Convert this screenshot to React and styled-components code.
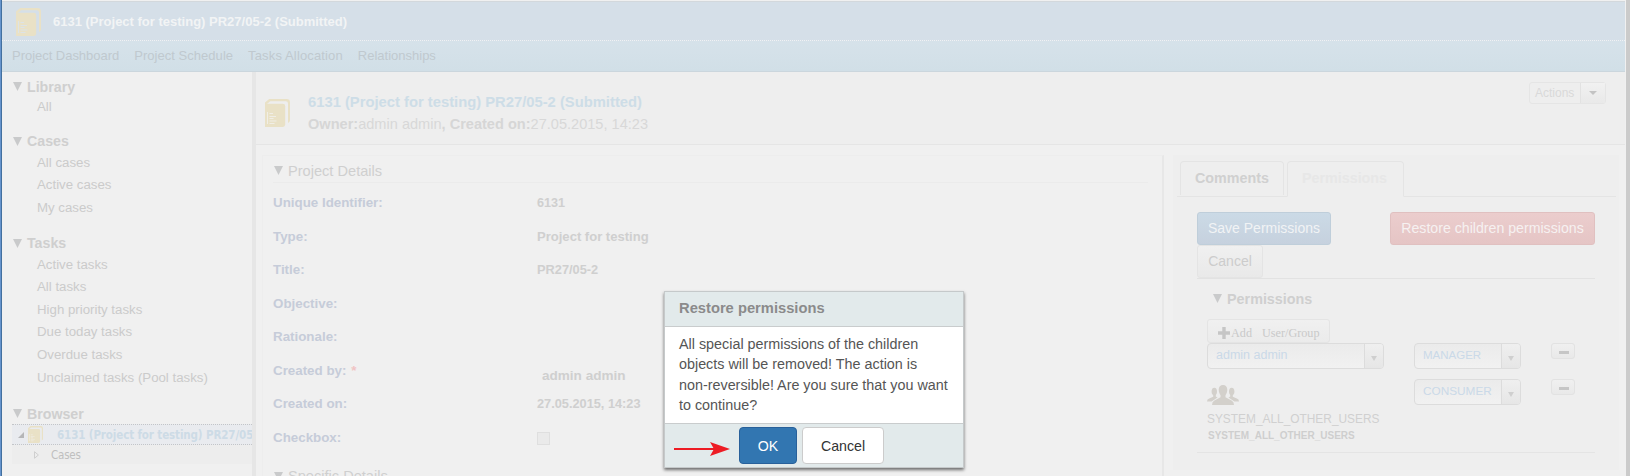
import React from "react";
import styled, { createGlobalStyle } from "styled-components";

const Global = createGlobalStyle`
  * { box-sizing: border-box; }
  html, body { margin: 0; padding: 0; overflow: hidden; }
  body { background: #f0f0f0; font-family: "Liberation Sans", Arial, sans-serif; color: #cdcdcd; }
`;

const Window = styled.div`
  position: relative;
  width: 1630px;
  height: 476px;
  overflow: hidden;
  display: flex;
  flex-direction: column;
  background: #f0f0f0;
  border-left: 1px solid #6694cd;
  border-right: 4px solid #cbcbcb;
  white-space: nowrap;
  &::before {
    content: "";
    position: absolute;
    left: 0;
    top: 0;
    bottom: 0;
    width: 1px;
    background: #43709f;
  }
`;

const TopBar = styled.header`
  height: 41px;
  margin: 0 1px;
  border-top: 1px solid #f0f0f0;
  border-bottom: 1px dotted #f0f2f4;
  background: #d5dfe8;
  box-shadow: inset 0 1px #d3d8dc;
  display: flex;
  align-items: center;
  padding: 2px 0 0 14px;
  gap: 12px;
`;

const BarTitle = styled.h1`
  margin: 0;
  font-size: 13px;
  line-height: 20px;
  color: #f2f4f5;
`;

const Nav = styled.nav`
  height: 31px;
  flex: none;
  margin: 0 1px;
  display: flex;
  align-items: center;
  gap: 15px;
  padding: 0 0 1px 10px;
  font-size: 13px;
  color: #c0c9cf;
  background: linear-gradient(#d6e2ea, #d1dfe7);
  border-bottom: 1px solid #cbd6dd;
`;

const NavItem = styled.span`
  letter-spacing: ${(p) => p.$track || 0}px;
`;

const Body = styled.div`
  flex: 1;
  min-height: 0;
  display: flex;
  margin-right: 1px;
`;

const Sidebar = styled.aside`
  width: 251px;
  flex: none;
  overflow: hidden;
  padding: 4px 0 0 11px;
`;

const Section = styled.section`
  margin-bottom: ${(p) => p.$gap}px;
`;

const Heading = styled.h2`
  margin: 0;
  height: ${(p) => p.$h || 21}px;
  display: flex;
  align-items: center;
  gap: 5px;
  padding-left: 1px;
  font-size: ${(p) => p.$size || 14.2}px;
  font-weight: ${(p) => (p.$light ? 400 : 700)};
  color: #cfcfcf;
`;

const PermissionHeading = styled(Heading)`
  padding-left: 6px;
  font-size: 14.35px;
`;

const Glyph = styled.svg`
  display: block;
  flex: none;
`;

const Item = styled.div`
  height: ${(p) => p.$h || 22.6}px;
  line-height: ${(p) => p.$h || 22.6}px;
  padding-left: 25px;
  font-size: 13.25px;
  color: #cbcbcb;
`;

const TreeNode = styled.div`
  height: 21px;
  display: flex;
  align-items: center;
  padding-left: 6px;
  background: #e9ebef;
  border-top: 1px dotted #c3c5c8;
  border-bottom: 1px dotted #c3c5c8;
  font: bold 11.5px "DejaVu Sans Condensed", "DejaVu Sans", sans-serif;
  letter-spacing: -0.12px;
  color: #cddbe6;
`;

const TreeIcon = styled.span`
  padding-left: 4px;
`;

const TreeLabel = styled.span`
  padding-left: 14px;
`;

const TreeLeaf = styled.div`
  height: 19px;
  display: flex;
  align-items: center;
  gap: 12px;
  padding-left: 22px;
  background: #ededed;
  font: 11.5px "DejaVu Sans Condensed", "DejaVu Sans", sans-serif;
  letter-spacing: -0.2px;
  color: #bfbfbf;
`;

const Splitter = styled.div`
  width: 4px;
  flex: none;
  background: #e6e6e6;
`;

const Main = styled.main`
  flex: 1;
  min-width: 0;
  display: flex;
  flex-direction: column;
`;

const ObjectHeader = styled.div`
  height: 73px;
  flex: none;
  display: flex;
  align-items: flex-start;
  padding: 0 19px 0 9px;
  background: #eeeeee;
  border-bottom: 1px solid #e5e5e5;
`;

const HeaderIcon = styled.div`
  padding-top: 27px;
  width: 43px;
`;

const HeaderText = styled.div`
  flex: 1;
  padding-top: 19px;
`;

const ObjectTitle = styled.div`
  font-size: 14.78px;
  line-height: 22px;
  font-weight: bold;
  color: #cddde7;
`;

const Meta = styled.div`
  font-size: 14.57px;
  line-height: 22px;
  color: #d8d8d8;
  b { color: #d6d6d6; }
`;

const ActionGroup = styled.div`
  display: flex;
  width: 77px;
  height: 22px;
  margin-top: 10px;
  border: 1px solid #e5e5e5;
  border-radius: 3px;
  font-size: 12px;
  color: #d9d9d9;
`;

const ActionLabel = styled.span`
  width: 50px;
  padding-left: 5px;
  line-height: 20px;
`;

const ActionCaret = styled.span`
  flex: 1;
  border-left: 1px solid #e2e2e2;
  background: linear-gradient(#f1f1f1, #e9e9e9);
  display: flex;
  align-items: center;
  justify-content: center;
  padding-bottom: 1px;
`;

const Columns = styled.div`
  display: flex;
  flex: 1;
  min-height: 0;
  padding: 10px 6px 0 6px;
  gap: 9px;
  align-items: flex-start;
`;

const Details = styled.section`
  width: 902px;
  height: 340px;
  flex: none;
  padding: 4px 14px 0 10px;
  background: #f0f0f0;
  border: 1px solid #ededed;
  border-right: 2px solid #e7e7e7;
`;

const Fields = styled.div`
  border-top: 1px solid #ebebeb;
  margin-top: 1px;
  padding-top: 3px;
`;

const Field = styled.div`
  height: 33.5px;
  display: grid;
  grid-template-columns: 264px 1fr;
  align-items: center;
  font-size: 13px;
  font-weight: bold;
`;

const Label = styled.span`
  font-size: 13.35px;
  color: #c6ccd9;
  em { color: #f0c4c4; font-style: normal; margin-left: 1px; }
`;

const Value = styled.span`
  color: #cfcfcf;
  font-size: ${(p) => (p.$inset ? 13.55 : p.$size || 13.05)}px;
  padding: ${(p) => (p.$inset ? "10px 0 0 5px" : 0)};
`;

const Check = styled.span`
  display: block;
  width: 13px;
  height: 13px;
  margin-top: 2px;
  background: #eaeaea;
  border: 1px solid #dfdfdf;
`;

const Side = styled.section`
  width: 446px;
  height: 315px;
  flex: none;
  padding: 6px 3px 0 4px;
  background: #eeeeee;
`;

const Tabs = styled.div`
  display: flex;
  height: 36px;
  padding-left: 3px;
  gap: 3px;
  border-bottom: 1px solid #e4e4e4;
`;

const Tab = styled.div`
  width: ${(p) => p.$w}px;
  height: ${(p) => (p.$active ? 36 : 34)}px;
  border: 1px solid #e4e4e4;
  border-bottom: ${(p) => (p.$active ? "1px solid #eee" : "none")};
  border-radius: 4px 4px 0 0;
  background: #eeeeee;
  padding-left: 14px;
  font-size: 14.3px;
  font-weight: bold;
  line-height: 33px;
  color: ${(p) => (p.$active ? "#e7e7e7" : "#d0d0d0")};
`;

const SideBody = styled.div`
  margin: 15px 21px 0 20px;
  border-bottom: 1px solid #e4e4e4;
  height: 241px;
`;

const ButtonRow = styled.div`
  display: flex;
  justify-content: space-between;
`;

const toneStyles = {
  primary: "background:linear-gradient(#cbdae6,#c6d1de);border-color:#bfceda;color:#f1f3f5;",
  danger: "background:linear-gradient(#ebcdcd,#e5c5c5);border-color:#e0c0c0;color:#f6f1f1;",
  plain: "background:linear-gradient(#f0f0f0,#e9e9e9);border-color:#e4e4e4;color:#cccccc;",
};

const Button = styled.button`
  width: ${(p) => p.$w}px;
  height: 33px;
  padding: 0 0 1px;
  border: 1px solid;
  border-radius: 3px;
  font: ${(p) => p.$size || 14}px "Liberation Sans", Arial, sans-serif;
  ${(p) => toneStyles[p.$tone]}
`;

const CancelRow = styled.div`
  height: 34px;
  display: flex;
  border-bottom: 1px solid #e2e2e2;
`;

const PermissionBlock = styled.div`
  padding: 9px 0 0 10px;
`;

const AddButton = styled.button`
  display: flex;
  align-items: center;
  width: 123px;
  height: 24px;
  margin-top: 10px;
  padding: 4px 0 0 10px;
  border: 1px solid #e4e4e4;
  border-radius: 3px;
  background: linear-gradient(#f0f0f0, #ebebeb);
  font: 12.2px "Liberation Serif", "Times New Roman", serif;
  color: #c9c9c9;
`;

const AddText = styled.span`
  width: 32px;
  padding-left: 1px;
  text-align: left;
`;

const PermissionRow = styled.div`
  display: grid;
  grid-template-columns: 207px 137px 24px;
  align-items: start;
  height: 36px;
`;

const SelectBox = styled.div`
  width: ${(p) => p.$w}px;
  height: 26px;
  display: flex;
  border: 1px solid #dcdcdc;
  border-radius: 4px;
  background: linear-gradient(#ebebeb, #f1f1f1);
  color: #cad9e8;
  font-size: ${(p) => p.$size}px;
  line-height: 22px;
  padding-left: 8px;
`;

const SelectArrow = styled.span`
  width: 19px;
  margin-left: auto;
  display: flex;
  align-items: center;
  justify-content: center;
  padding-top: 4px;
  border-left: 1px solid #dcdcdc;
  border-radius: 0 3px 3px 0;
  background: linear-gradient(#efefef, #e6e6e6);
`;

const MinusButton = styled.button`
  width: 24px;
  height: 16px;
  padding: 0;
  border: 1px solid #e2e2e2;
  border-radius: 3px;
  background: linear-gradient(#f0f0f0, #e9e9e9);
  display: flex;
  align-items: center;
  justify-content: center;
  &::after {
    content: "";
    width: 10px;
    height: 3px;
    margin: 2px 0 0 1px;
    background: #c6c6c6;
  }
`;

const Group = styled.div`
  padding-top: 6px;
`;

const GroupName = styled.div`
  margin-top: 5px;
  font-size: 11.9px;
  line-height: 18px;
  color: #d0d0d0;
`;

const GroupId = styled.div`
  font-size: 10px;
  line-height: 16px;
  font-weight: bold;
  padding-left: 1px;
  color: #cecece;
`;

const Dialog = styled.div`
  position: absolute;
  left: 663px;
  top: 291px;
  width: 300px;
  height: 177px;
  border: 1px solid #c5c9ca;
  background: #fff;
  box-shadow: 0 2px 3px rgba(0, 0, 0, 0.55);
  display: flex;
  flex-direction: column;
`;

const DialogTitle = styled.div`
  height: 35px;
  flex: none;
  line-height: 33px;
  padding-left: 14px;
  background: #e2eaeb;
  border-bottom: 1px solid #c9cccd;
  font-size: 14.72px;
  font-weight: bold;
  color: #8b8b8b;
`;

const DialogText = styled.p`
  margin: 0;
  flex: 1;
  padding: 7px 0 0 14px;
  font-size: 14.35px;
  line-height: 20.3px;
  color: #555;
`;

const DialogFooter = styled.div`
  height: 44px;
  flex: none;
  display: flex;
  align-items: flex-start;
  padding: 3px 0 0 9px;
  background: #e2eaeb;
  border-top: 1px solid #c9cccd;
`;

const DialogButton = styled.button`
  width: ${(p) => p.$w}px;
  height: 37px;
  margin-left: ${(p) => p.$ml}px;
  padding: 0;
  border: 1px solid ${(p) => (p.$primary ? "#28609a" : "#cccccc")};
  border-radius: 4px;
  background: ${(p) => (p.$primary ? "#3276b1" : "#fff")};
  color: ${(p) => (p.$primary ? "#fff" : "#333")};
  font: 14.2px "Liberation Sans", Arial, sans-serif;
`;

const Arrow = styled.svg`
  margin-top: 15px;
`;

function Triangle({ w = 9, h = 9, color = "#c9cacb" }) {
  return (
    <Glyph width={w} height={h} viewBox="0 0 9 9" preserveAspectRatio="none">
      <path d="M0 0H9L4.5 9Z" fill={color} />
    </Glyph>
  );
}

function ProjectIcon({ w = 25, h = 28, mark = "#f0eee6" }) {
  return (
    <Glyph width={w} height={h} viewBox="0 0 25 28">
      <path d="M0 5.5V3.6L4.2 0H21.6Q25 0 25 3.4V21.5Q25 22.8 23 24V4.4Q23 2.2 20.8 2.2H5.2L2.2 4.8Z" fill="#e9e1c6" />
      <path d="M0 4.8H17.8Q20.2 4.8 20.2 7.2V25.6Q20.2 28 17.8 28H0Z" fill="#e9e1c6" />
      <path d="M2.5 13V25" stroke={mark} strokeWidth="1" />
      <path d="M4.5 14.5H8M4.5 17.5H11M4.5 19.5H8.5M4.5 22H11.5M4.5 24.5H9.5" stroke={mark} strokeWidth="1" />
    </Glyph>
  );
}

function PeopleIcon() {
  return (
    <Glyph width="32" height="20" viewBox="0 0 32 20">
      <g fill="#d3d0cb">
        <ellipse cx="7.3" cy="6.6" rx="2.7" ry="3.8" />
        <ellipse cx="24.7" cy="6.6" rx="2.7" ry="3.8" />
        <path d="M6.2 9H8.8V11.6L10.5 12.4 4.6 16.6H0Q0 14.3 2.2 13.6L6.2 11.8Z" />
        <path d="M25.8 9H23.2V11.6L21.5 12.4 27.4 16.6H32Q32 14.3 29.8 13.6L25.8 11.8Z" />
      </g>
      <path
        d="M16 0C13.4 0 11.7 1.8 11.7 4.8 11.7 7 12.5 9 13.5 10.2V12.3L7.4 15.4Q5 16.6 5 20H27Q27 16.6 24.6 15.4L18.5 12.3V10.2C19.5 9 20.3 7 20.3 4.8 20.3 1.8 18.6 0 16 0Z"
        fill="#d3d0cb"
      />
    </Glyph>
  );
}

function Select({ w, size, children }) {
  return (
    <SelectBox $w={w} $size={size}>
      {children}
      <SelectArrow>
        <Triangle w={6} h={5} color="#cfcfcf" />
      </SelectArrow>
    </SelectBox>
  );
}

const sections = [
  { title: "Library", gap: 14.5, h: 19, items: ["All"] },
  { title: "Cases", gap: 13.4, items: ["All cases", "Active cases", "My cases"] },
  {
    title: "Tasks",
    gap: 13.8,
    items: [
      "Active tasks",
      "All tasks",
      "High priority tasks",
      "Due today tasks",
      "Overdue tasks",
      "Unclaimed tasks (Pool tasks)",
    ],
  },
];

const title = "6131 (Project for testing) PR27/05-2 (Submitted)";

export default function App() {
  return (
    <Window>
      <Global />
      <TopBar>
        <ProjectIcon mark="#dde3e6" />
        <BarTitle>{title}</BarTitle>
      </TopBar>
      <Nav>
        <NavItem $track={-0.03}>Project Dashboard</NavItem>
        <NavItem $track={0.04}>Project Schedule</NavItem>
        <NavItem $track={0.14}>Tasks Allocation</NavItem>
        <NavItem>Relationships</NavItem>
      </Nav>
      <Body>
        <Sidebar>
          {sections.map((s) => (
            <Section key={s.title} $gap={s.gap}>
              <Heading><Triangle />{s.title}</Heading>
              {s.items.map((i) => <Item key={i} $h={s.h}>{i}</Item>)}
            </Section>
          ))}
          <Heading><Triangle />Browser</Heading>
          <TreeNode>
            <Glyph width="6" height="6"><path d="M6 0V6H0Z" fill="#b5b6b8" /></Glyph>
            <TreeIcon><ProjectIcon w={15} h={17} /></TreeIcon>
            <TreeLabel>6131 (Project for testing) PR27/05</TreeLabel>
          </TreeNode>
          <TreeLeaf>
            <Glyph width="5" height="8"><path d="M.5 .7V7.3L4.4 4Z" fill="none" stroke="#cfcfcf" /></Glyph>
            Cases
          </TreeLeaf>
        </Sidebar>
        <Splitter />
        <Main>
          <ObjectHeader>
            <HeaderIcon><ProjectIcon /></HeaderIcon>
            <HeaderText>
              <ObjectTitle>{title}</ObjectTitle>
              <Meta><b>Owner:</b>admin admin<b>, Created on:</b>27.05.2015, 14:23</Meta>
            </HeaderText>
            <ActionGroup>
              <ActionLabel>Actions</ActionLabel>
              <ActionCaret><Triangle w={8} h={4} color="#c3c3c3" /></ActionCaret>
            </ActionGroup>
          </ObjectHeader>
          <Columns>
            <Details>
              <Heading $light $size={14.6}><Triangle />Project Details</Heading>
              <Fields>
                <Field><Label>Unique Identifier:</Label><Value $size={12.6}>6131</Value></Field>
                <Field><Label>Type:</Label><Value>Project for testing</Value></Field>
                <Field><Label>Title:</Label><Value $size={12.8}>PR27/05-2</Value></Field>
                <Field><Label>Objective:</Label></Field>
                <Field><Label>Rationale:</Label></Field>
                <Field><Label>Created by: <em>*</em></Label><Value $inset>admin admin</Value></Field>
                <Field><Label>Created on:</Label><Value $size={12.75}>27.05.2015, 14:23</Value></Field>
                <Field><Label>Checkbox:</Label><Check /></Field>
              </Fields>
              <Heading $light $size={14.6} $h={44}><Triangle />Specific Details</Heading>
            </Details>
            <Side>
              <Tabs>
                <Tab $w={104}>Comments</Tab>
                <Tab $w={117} $active>Permissions</Tab>
              </Tabs>
              <SideBody>
                <ButtonRow>
                  <Button $tone="primary" $w={134}>Save Permissions</Button>
                  <Button $tone="danger" $w={205} $size={14.17}>Restore children permissions</Button>
                </ButtonRow>
                <CancelRow><Button $tone="plain" $w={66}>Cancel</Button></CancelRow>
                <PermissionBlock>
                  <PermissionHeading><Triangle />Permissions</PermissionHeading>
                  <AddButton>
                    <Glyph width="12" height="12"><path d="M4.3 0H7.7V4.3H12V7.7H7.7V12H4.3V7.7H0V4.3H4.3Z" fill="#c6c6c6" /></Glyph>
                    <AddText>Add</AddText>
                    <span>User/Group</span>
                  </AddButton>
                  <PermissionRow>
                    <Select w={177} size={12.5}>admin admin</Select>
                    <Select w={107} size={11.5}>MANAGER</Select>
                    <MinusButton />
                  </PermissionRow>
                  <PermissionRow>
                    <Group>
                      <PeopleIcon />
                      <GroupName>SYSTEM_ALL_OTHER_USERS</GroupName>
                      <GroupId>SYSTEM_ALL_OTHER_USERS</GroupId>
                    </Group>
                    <Select w={107} size={11.8}>CONSUMER</Select>
                    <MinusButton />
                  </PermissionRow>
                </PermissionBlock>
              </SideBody>
            </Side>
          </Columns>
        </Main>
      </Body>
      <Dialog>
        <DialogTitle>Restore permissions</DialogTitle>
        <DialogText>
          All special permissions of the children<br />
          objects will be removed! The action is<br />
          non-reversible! Are you sure that you want<br />
          to continue?
        </DialogText>
        <DialogFooter>
          <Arrow width="56" height="14" viewBox="0 0 56 14">
            <path d="M0 7H40" stroke="#ed1c24" strokeWidth="2" />
            <path d="M36 0 56 7 36 14 40 7Z" fill="#ed1c24" />
          </Arrow>
          <DialogButton $primary $w={58} $ml={9}>OK</DialogButton>
          <DialogButton $w={82} $ml={5}>Cancel</DialogButton>
        </DialogFooter>
      </Dialog>
    </Window>
  );
}
